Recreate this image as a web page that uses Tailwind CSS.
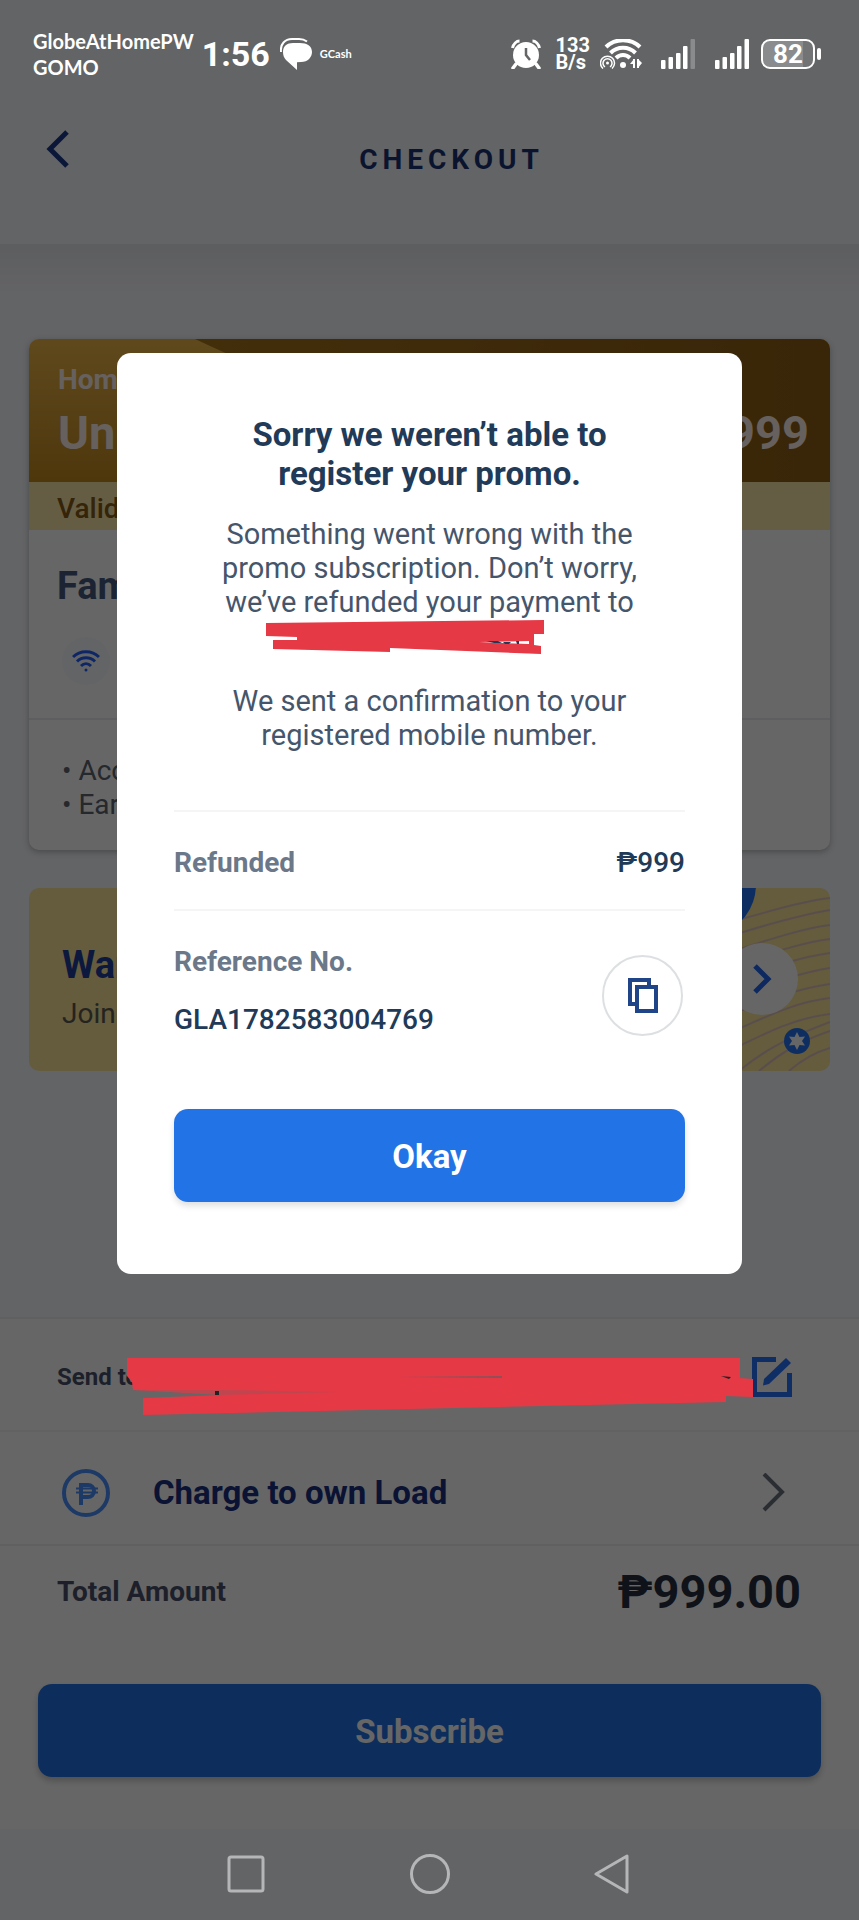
<!DOCTYPE html>
<html lang="en">

<head>
    <meta charset="UTF-8">
    <meta name="viewport" content="width=device-width, initial-scale=1.0">
    <title>Checkout</title>
    <script src="https://cdn.jsdelivr.net/npm/@tailwindcss/browser@4"></script>
</head>

<body class="bg-[#f8f9fd]">
    <div class="relative min-h-screen overflow-hidden font-['Roboto',sans-serif] text-[28px] leading-[34px]">

        <!-- Status bar -->
        <div class="relative z-30 flex h-[108px] items-center justify-between pl-[33px] pr-[38px] text-white">
            <div class="flex items-center">
                <div class="font-['Lato',sans-serif] text-[20px] leading-[26px] font-bold">
                    <p>GlobeAtHomePW</p>
                    <p>GOMO</p>
                </div>
                <span class="ml-2 text-[34px] font-bold">1:56</span>
                <svg class="ml-[10px] h-8 w-8" viewBox="0 0 32 32" fill="#fff">
                    <path d="M3 14C3 8 7 5 13 5h7c7 0 12 3 12 9 0 5-4 10-11 10l-4 .3V32L6 22c-2-2-3-5-3-8z" />
                    <path d="M1 14C0 6 5 1 12 1h7c4 0 6 1 8 2.500" fill="none" stroke="#fff" stroke-width="2" />
                </svg>
                <span class="ml-2 font-['Lato',sans-serif] text-[11px] font-bold">GCash</span>
            </div>
            <div class="flex items-center">
                <svg class="h-[30px] w-[30px]" viewBox="0 0 30 30">
                    <circle cx="15" cy="16" r="13" fill="#fff" />
                    <path d="M1.500 9c1-4 4-7 7-7M28.500 9c-1-4-4-7-7-7" fill="none" stroke="#fff" stroke-width="3" />
                    <path d="M5 25l-3 4M25 25l3 4" stroke="#fff" stroke-width="3.500" stroke-linecap="round" />
                    <path d="M15 9v7l4 5" fill="none" stroke="#646567" stroke-width="2.500" />
                </svg>
                <div class="ml-[15px] text-[20px] leading-[17px] font-bold">
                    <p>133</p>
                    <p>B/s</p>
                </div>
                <svg class="ml-[10px] h-[30px] w-[42px]" viewBox="0 0 42 30" fill="none" stroke="#fff">
                    <path d="M6 8C15-1 31-1 40 8M10.500 14c7-7 18-7 25 0M16 19c4-4 10-4 14 0" stroke-width="4" />
                    <circle cx="23" cy="26" r="3" fill="#fff" stroke="none" />
                    <circle cx="7.500" cy="24" r="1.500" fill="#fff" stroke="none" />
                    <path d="M5 28a4.500 4.500 0 1 1 5 0M3 29.500a7 7 0 1 1 9 0" stroke-width="1.500" />
                    <path d="M34 20v9M38 20v9" stroke-width="2" />
                    <path d="M30 25l4-5v5zM38 20v9l4-5z" fill="#fff" stroke="none" />
                </svg>
                <svg class="ml-[19px] h-[30px] w-[34px]" viewBox="0 0 34 30" fill="#fff">
                    <rect x="0" y="21" width="4.500" height="9" rx="1" />
                    <rect x="7.500" y="18" width="4.500" height="12" rx="1" />
                    <rect x="15" y="14" width="4.500" height="16" rx="1" />
                    <rect x="22" y="7" width="4.500" height="23" rx="1" />
                    <rect x="29.500" y="0" width="4.500" height="30" rx="1" fill="#8a8b8c" />
                </svg>
                <svg class="ml-5 h-[30px] w-[34px]" viewBox="0 0 34 30" fill="#fff">
                    <rect x="0" y="21" width="4.500" height="9" rx="1" />
                    <rect x="7.500" y="18" width="4.500" height="12" rx="1" />
                    <rect x="15" y="14" width="4.500" height="16" rx="1" />
                    <rect x="22" y="7" width="4.500" height="23" rx="1" />
                    <rect x="29.500" y="0" width="4.500" height="30" rx="1" />
                </svg>
                <div class="ml-3 flex h-[30px] w-[54px] items-center justify-center rounded-[9px] border-2 border-white bg-linear-to-r from-[#8a8b8c] from-80% to-[#727374] to-80% text-[26px] font-bold">82</div>
                <div class="ml-[2px] h-3 w-1 rounded-sm bg-white"></div>
            </div>
        </div>

        <!-- Header -->
        <header class="grid h-[136px] grid-cols-[94px_1fr_50px] items-start">
            <button type="button" aria-label="Back" class="mt-[21px] ml-[46px] w-6">
                <svg class="h-10 w-6" viewBox="0 0 24 40" fill="none" stroke="#1c3b8c" stroke-width="5">
                    <path d="M21 3L4 20l17 17" />
                </svg>
            </button>
            <h1 class="mt-[35px] text-center font-bold tracking-[5px] text-[#1c3474]">CHECKOUT</h1>
        </header>
        <div class="h-12 bg-linear-to-b from-[#e8eaed] to-[#f8f9fd]"></div>

        <main class="px-[29px] pt-[47px]">
            <!-- Promo card -->
            <section class="overflow-hidden rounded-[10px] bg-white shadow-[0_2px_6px_#b4b7bd]">
                <div class="relative h-[143px] bg-linear-to-b from-[#ecb648] to-[#c28a1c] px-[29px] pt-[24px] text-[#fff3ea]">
                    <svg class="absolute inset-0 h-full w-full" viewBox="0 0 801 143" preserveAspectRatio="none">
                        <defs>
                            <linearGradient id="gold" x1="0" x2="1">
                                <stop offset="0" stop-color="#a8741c" />
                                <stop offset="1" stop-color="#8e5f16" />
                            </linearGradient>
                        </defs>
                        <path d="M166 0H801V143H400C360 70 270 50 166 0z" fill="url(#gold)" />
                    </svg>
                    <p class="relative font-bold">Home</p>
                    <div class="relative mt-3 flex items-center justify-between font-bold leading-[48px]">
                        <p class="text-[47px]">Unli</p>
                        <p class="-mr-[8px] text-[47px]">₱999</p>
                    </div>
                </div>
                <p class="h-12 bg-[#fde8a8] px-[28px] pt-[10px] font-medium text-[#845a16]">Valid</p>
                <div class="h-[190px] border-b-2 border-[#ebecef] px-[28px] pt-[34px]">
                    <h2 class="text-[38px] leading-[44px] font-bold text-[#465a80]">Fam</h2>
                    <div class="mt-[29px] ml-[5px] flex h-12 w-12 items-center justify-center rounded-full bg-[#f8faff]">
                        <svg class="h-[22px] w-[28px]" viewBox="0 0 28 22" fill="none" stroke="#2560ff" stroke-width="3">
                            <path d="M1 7C8 0 20 0 27 7M5 11.500c5-5 13-5 18 0M9 16c3-3 7-3 10 0" />
                            <circle cx="14" cy="20" r="1.500" fill="#2560ff" stroke="none" />
                        </svg>
                    </div>
                </div>
                <ul class="h-[130px] list-none px-[33px] pt-[34px] text-[#5c6470]">
                    <li>• Access</li>
                    <li>• Earn</li>
                </ul>
            </section>

            <!-- Banner -->
            <a href="#" class="relative mt-[38px] block h-[183px] overflow-hidden rounded-[10px] bg-[#f9e599] pt-[55px] pl-[33px]">
                <svg class="absolute top-0 right-0 h-full w-[201px]" viewBox="0 0 201 183" fill="none">
                    <g stroke="#e0c4c0" stroke-width="2">
                        <path d="M100 34C135 26 165 14 201 10" />
                        <path d="M100 48C135 38 165 28 201 22" />
                        <path d="M100 64C135 54 165 42 201 37" />
                        <path d="M100 78C135 68 165 56 201 51" />
                        <path d="M100 94C135 82 165 70 201 65" />
                        <path d="M100 110C135 98 165 86 201 80" />
                        <path d="M100 127C135 114 165 101 201 96" />
                        <path d="M100 145C135 130 165 114 201 110" />
                        <path d="M100 163C135 146 165 130 201 126" />
                        <path d="M110 183C140 158 165 148 201 134" />
                        <path d="M130 183C155 162 175 152 201 143" />
                        <path d="M160 183C175 170 187 164 201 160" />
                    </g>
                    <ellipse cx="90" cy="-4" rx="37" ry="46" fill="#2474f4" />
                    <circle cx="133" cy="91" r="36" fill="#fff" />
                    <path d="M126 78l13 13-13 13" stroke="#2268f0" stroke-width="5" />
                    <circle cx="168" cy="153" r="13" fill="#2474f4" />
                    <path d="M168 144l2.500 5 5.500-.5-3 4.500 3 4.500-5.500-.5-2.500 5-2.500-5-5.500.5 3-4.500-3-4.500 5.500.5z" fill="#fff" />
                </svg>
                <h2 class="text-[38px] leading-[44px] font-bold text-[#1e3c98]">Want</h2>
                <p class="mt-[10px] text-[#5d584f]">Join</p>
            </a>
        </main>

        <!-- Payment panel -->
        <section class="mt-[246px] h-[512px] border-t-2 border-[#f0f1f3] bg-white">
            <div class="relative flex h-[113px] items-center justify-between border-b-2 border-[#f4f5f6] pt-[5px] pr-[67px] pl-[57px]">
                <span class="text-[24px] font-bold text-[#49526a]">Send to</span>
                <button type="button" aria-label="Edit recipient">
                    <svg class="h-10 w-10" viewBox="0 0 40 40" fill="none" stroke="#2a74ff">
                        <path d="M24 2.500H2.500v35h35V16" stroke-width="5" />
                        <path d="M34 1l5 5-22 21-6 1.500L12 22z" fill="#2a74ff" stroke="none" />
                    </svg>
                </button>
                <svg class="absolute top-[39px] left-[127px] z-30 h-[58px] w-[626px]" viewBox="0 0 626 58">
                    <path d="M0 0H613V20L626 21V39L599 38V44L16 57V40L95 37L6 32L5 24L0 18z" fill="#e63946" />
                    <path d="M6 32L95 37 210 34 95 32z" fill="#666" opacity=".3" />
                    <path d="M270 19L375 18V20z" fill="#8e5058" />
                    <path d="M88 33h4v4h-4z" fill="#222" />
                    <path d="M594 18l10 1-2 2z" fill="#222" />
                </svg>
            </div>
            <button type="button" class="flex h-[114px] w-full items-center border-b-2 border-[#f0f1f3] pt-[9px] pr-[74px] pl-[62px] text-left">
                <svg class="h-12 w-12" viewBox="0 0 48 48" fill="none" stroke="#4a90ff">
                    <circle cx="24" cy="24" r="22" stroke-width="4" />
                    <path d="M19 36V16h7a6 6 0 0 1 0 12h-7" stroke-width="4" />
                    <path d="M14 19.500h22M14 23.500h22" stroke-width="2" />
                </svg>
                <span class="ml-[43px] flex-1 text-[33px] font-bold text-[#1a3080]">Charge to own Load</span>
                <svg class="h-10 w-6" viewBox="0 0 24 40" fill="none" stroke="#6a727c" stroke-width="4">
                    <path d="M3 1l18 18L3 37" />
                </svg>
            </button>
            <div class="flex h-[92px] items-center justify-between pr-[58px] pl-[57px]">
                <span class="font-bold text-[#49526a]">Total Amount</span>
                <span class="text-[47px] font-bold text-[#27303f]">₱999.00</span>
            </div>
            <div class="px-[38px] pt-[46px]">
                <button type="button" class="h-[93px] w-full rounded-[14px] bg-[#2273e6] pt-[2px] text-[33px] font-bold text-white shadow-[0_4px_6px_#c8c8c8]">Subscribe</button>
            </div>
        </section>

        <!-- System navigation -->
        <nav class="relative z-30 flex h-[90px] items-center justify-between px-[226px]">
            <button type="button" aria-label="Recent apps">
                <svg class="h-10 w-10" viewBox="0 0 40 40" fill="none" stroke="#b5b6b7" stroke-width="3">
                    <rect x="3" y="3" width="34" height="34" rx="2" />
                </svg>
            </button>
            <button type="button" aria-label="Home">
                <svg class="h-10 w-10" viewBox="0 0 40 40" fill="none" stroke="#b5b6b7" stroke-width="3">
                    <circle cx="20" cy="20" r="18.500" />
                </svg>
            </button>
            <button type="button" aria-label="Back">
                <svg class="h-10 w-10" viewBox="0 0 40 40" fill="none" stroke="#b5b6b7" stroke-width="3" stroke-linejoin="round">
                    <path d="M34 2v36L3 20z" />
                </svg>
            </button>
        </nav>

        <!-- Dialog -->
        <div class="absolute inset-0 z-20 flex items-start bg-black/60 px-[117px] pt-[353px]">
            <div role="dialog" aria-labelledby="dialogTitle" class="w-full rounded-[14px] bg-white px-[57px] pt-[62px] pb-[72px] text-[#45566c]">
                <h2 id="dialogTitle" class="text-center text-[33px] leading-[39px] font-bold text-[#213a58]">Sorry we weren’t able to<br>register your promo.</h2>
                <p class="mt-6 text-center text-[29px]">Something went wrong with the<br>promo subscription. Don’t worry,<br>we’ve refunded your payment to</p>
                <svg class="mx-auto h-[65px] w-[328px]" viewBox="0 0 328 65">
                    <path d="M0 4L278 1V15H268V26L275 27V35L124 29V33L7 30V21H31V18L0 17z" fill="#e63946" />
                    <path d="M213 23l50-1v3z" fill="#fff" />
                    <path d="M220 22h12l4 2h-8zM237 23h8l-2 2h-4zM250 22h3v3h-2z" fill="#213a58" />
                </svg>
                <p class="text-center text-[29px]">We sent a confirmation to your<br>registered mobile number.</p>
                <div class="mt-[58px] flex h-[101px] items-center justify-between border-y-2 border-[#f5f5f6] pt-1">
                    <span class="font-bold text-[#6b788a]">Refunded</span>
                    <span class="font-medium text-[#213a58]">₱999</span>
                </div>
                <div class="mt-[34px] flex items-center justify-between">
                    <div>
                        <p class="font-bold text-[#6b788a]">Reference No.</p>
                        <p class="mt-[24px] font-medium text-[#213a58]">GLA1782583004769</p>
                    </div>
                    <button type="button" aria-label="Copy reference number" class="mt-2 mr-[2px] flex h-[81px] w-[81px] items-center justify-center rounded-full border-2 border-[#dde0e2]">
                        <svg class="h-9 w-8" viewBox="0 0 32 36" fill="none" stroke="#204488" stroke-width="4">
                            <path d="M9 27H3V3h19v6" />
                            <rect x="10" y="10" width="19" height="24" />
                        </svg>
                    </button>
                </div>
                <button type="button" class="mt-[72px] h-[93px] w-full rounded-[14px] bg-[#2273e6] pt-[2px] text-[33px] font-bold text-white shadow-[0_4px_6px_#e0e0e0]">Okay</button>
            </div>
        </div>
    </div>
</body>

</html>
